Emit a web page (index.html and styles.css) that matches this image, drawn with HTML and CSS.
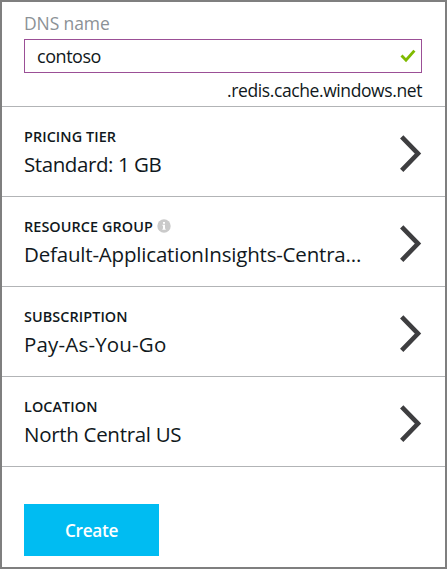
FILE: index.html
```html
<!DOCTYPE html>
<html lang="en">
<head>
<meta charset="utf-8">
<title>New Redis Cache</title>
<link rel="stylesheet" href="styles.css">
</head>
<body>
<main class="blade">
  <section class="dns">
    <label class="dns-label"><span>DNS name</span></label>
    <div class="field">
      <span class="field-text">contoso</span>
      <svg class="check" width="16" height="14" viewBox="0 0 16 14"><path d="M1.5 6.6 6 11.2 14.4 1.6" fill="none" stroke="#7fba00" stroke-width="2.9"/></svg>
    </div>
    <div class="suffix">.redis.cache.windows.net</div>
  </section>
  <section class="row">
    <div class="info">
      <div class="title"><span>PRICING TIER</span></div>
      <div class="value v-pricing">Standard: 1 GB</div>
    </div>
    <svg class="chevron" width="22" height="38" viewBox="0 0 22 38"><path d="M1.7 2.9 18 19.6 1.7 36.3" fill="none" stroke="#3e3e40" stroke-width="4.6"/></svg>
  </section>
  <section class="row">
    <div class="info">
      <div class="title"><span>RESOURCE GROUP</span>
        <svg class="tip" width="14" height="14" viewBox="0 0 14 14"><circle cx="7" cy="7" r="6.7" fill="#cacaca"/><path d="M6 3h2v1.8H6zM5.4 5.8H8v4h.7v1H5.4v-1H6v-3h-.6z" fill="#fff"/></svg>
      </div>
      <div class="value v-group">Default-ApplicationInsights-Centra...</div>
    </div>
    <svg class="chevron" width="22" height="38" viewBox="0 0 22 38"><path d="M1.7 2.9 18 19.6 1.7 36.3" fill="none" stroke="#3e3e40" stroke-width="4.6"/></svg>
  </section>
  <section class="row">
    <div class="info">
      <div class="title"><span>SUBSCRIPTION</span></div>
      <div class="value v-sub">Pay-As-You-Go</div>
    </div>
    <svg class="chevron" width="22" height="38" viewBox="0 0 22 38"><path d="M1.7 2.9 18 19.6 1.7 36.3" fill="none" stroke="#3e3e40" stroke-width="4.6"/></svg>
  </section>
  <section class="row">
    <div class="info">
      <div class="title"><span>LOCATION</span></div>
      <div class="value v-loc">North Central US</div>
    </div>
    <svg class="chevron" width="22" height="38" viewBox="0 0 22 38"><path d="M1.7 2.9 18 19.6 1.7 36.3" fill="none" stroke="#3e3e40" stroke-width="4.6"/></svg>
  </section>
  <button class="create">Create</button>
</main>
</body>
</html>
```
FILE: styles.css
```css
* { box-sizing: border-box; }
body { margin: 0; background: #fff; font-family: "Open Sans", "Noto Sans", sans-serif; color: #101820; }
.blade { width: 447px; height: 569px; border: 2px solid #7f7f7f; overflow: hidden; }
.dns { height: 105px; padding: 8px 23px 0 22px; border-bottom: 1px solid #b2b4b6; }
.dns-label { display: block; height: 29px; line-height: 26px; font-size: 17.5px; letter-spacing: -0.1px; color: #8b9196; }
.field { display: flex; align-items: center; justify-content: space-between; width: 398px; height: 34px; padding: 0 5px 0 12px; border: 1px solid #9b4f96; }
.field-text { font-size: 18px; line-height: 32px; letter-spacing: -0.45px; }
.suffix { height: 32px; line-height: 35px; font-size: 17.5px; letter-spacing: -0.4px; text-align: right; white-space: nowrap; }
.row { display: flex; justify-content: space-between; height: 90px; padding: 20px 23px 0 22px; border-bottom: 1px solid #b2b4b6; }
.title { display: flex; align-items: center; gap: 4px; height: 20px; font-size: 14.4px; line-height: 20px; font-weight: 560; letter-spacing: 0.08px; white-space: nowrap; }
.tip { margin-top: -2px; }
.value { line-height: 34px; font-size: 20.5px; font-weight: 370; white-space: nowrap; }
.v-pricing { letter-spacing: -0.42px; }
.v-group { letter-spacing: -0.19px; }
.v-sub { letter-spacing: 0.18px; }
.v-loc { letter-spacing: -0.3px; }
.chevron { margin-top: 7px; flex: none; }
.create { display: block; width: 135px; height: 52px; margin: 37px 0 0 22px; padding: 0; border: 0; background: #00bcf2; color: #fff; font: 560 17.2px/54px "Open Sans", sans-serif; letter-spacing: -0.3px; }
```
